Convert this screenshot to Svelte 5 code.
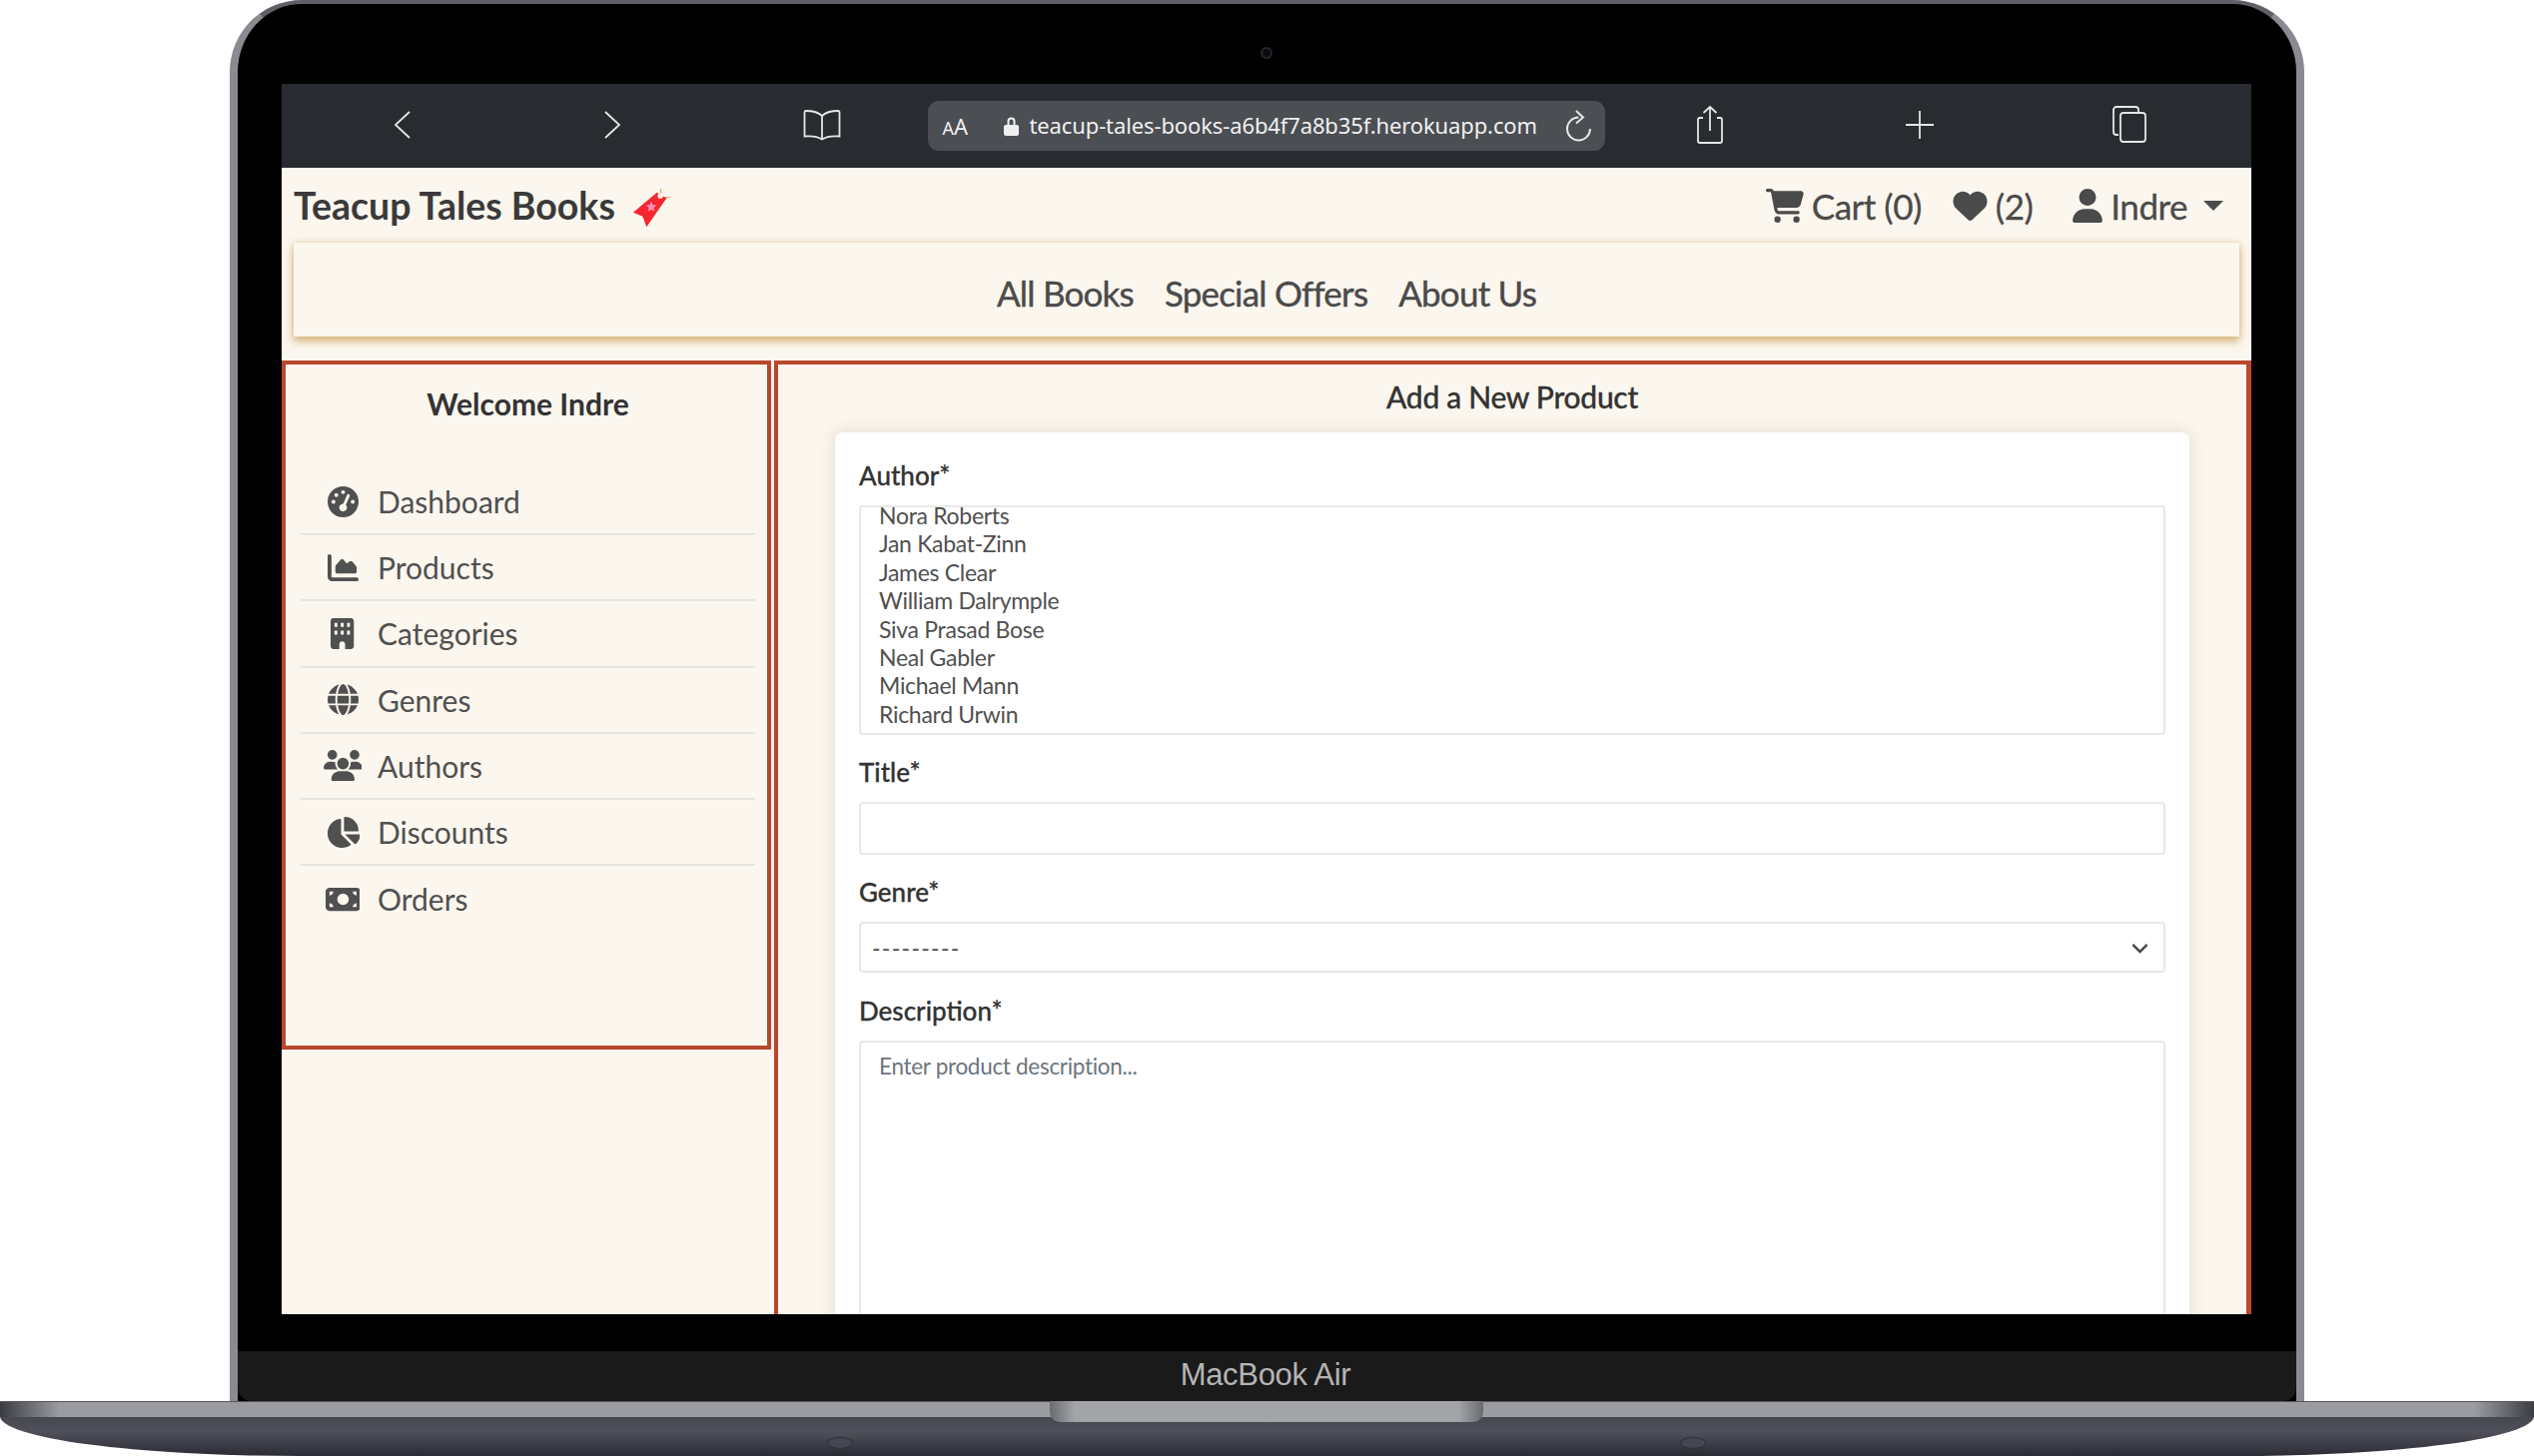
<script lang="ts">
	const sideLinks = [
		{ label: 'Dashboard', vb: '0 0 512 512', d: 'M0 256a256 256 0 1 1 512 0A256 256 0 1 1 0 256zM288 96a32 32 0 1 0 -64 0 32 32 0 1 0 64 0zM256 416c35.3 0 64-28.7 64-64c0-17.4-6.9-33.1-18.2-44.6L366 161.7c5.3-12.1-.2-26.3-12.3-31.6s-26.3 .2-31.6 12.3L257.9 288c-.6 0-1.3 0-1.9 0c-35.3 0-64 28.7-64 64s28.7 64 64 64zM176 144a32 32 0 1 0 -64 0 32 32 0 1 0 64 0zM96 288a32 32 0 1 0 0-64 32 32 0 1 0 0 64zm352-32a32 32 0 1 0 -64 0 32 32 0 1 0 64 0z' },
		{ label: 'Products', vb: '0 0 512 512', d: 'M64 64c0-17.7-14.3-32-32-32S0 46.3 0 64V400c0 44.2 35.8 80 80 80H480c17.7 0 32-14.3 32-32s-14.3-32-32-32H80c-8.8 0-16-7.2-16-16V64zm96 288H448c17.7 0 32-14.3 32-32V251.8c0-7.6-2.7-15-7.7-20.8l-65.8-76.8c-12.1-14.2-33.7-15-46.9-1.8l-21 21c-10 10-26.4 9.2-35.4-1.6l-39.2-47c-12.6-15.1-35.7-15.4-48.7-.6L135.9 215c-5.1 5.8-7.9 13.3-7.9 21.1v84c0 17.7 14.3 32 32 32z' },
		{ label: 'Categories', vb: '0 0 384 512', d: 'M48 0C21.5 0 0 21.5 0 48V464c0 26.5 21.5 48 48 48h96V432c0-26.5 21.5-48 48-48s48 21.5 48 48v80h96c26.5 0 48-21.5 48-48V48c0-26.5-21.5-48-48-48H48zM64 80h48v64H64zm104 0h48v64h-48zm104 0h48v64h-48zM64 208h48v64H64zm104 0h48v64h-48zm104 0h48v64h-48z' },
		{ label: 'Genres', vb: '0 0 512 512', d: 'M352 256c0 22.2-1.2 43.6-3.3 64H163.3c-2.2-20.4-3.3-41.8-3.3-64s1.2-43.6 3.3-64H348.7c2.2 20.4 3.3 41.8 3.3 64zm28.8-64H503.9c5.3 20.5 8.1 41.9 8.1 64s-2.8 43.5-8.1 64H380.8c2.1-20.6 3.2-42 3.2-64s-1.1-43.4-3.2-64zm112.6-32H376.7c-10-63.9-29.8-117.4-55.3-151.6c78.3 20.7 142 77.5 171.9 151.6zm-149.1 0H167.7c6.1-36.4 15.5-68.6 27-94.7c10.5-23.6 22.2-40.7 33.5-51.5C239.4 3.2 248.7 0 256 0s16.6 3.2 27.8 13.8c11.3 10.8 23 27.9 33.5 51.5c11.6 26 20.9 58.2 27 94.7zm-209 0H18.6C48.6 85.9 112.2 29.1 190.6 8.4C165.1 42.6 145.3 96.1 135.3 160zM8.1 192H131.2c-2.1 20.6-3.2 42-3.2 64s1.1 43.4 3.2 64H8.1C2.8 299.5 0 278.1 0 256s2.8-43.5 8.1-64zM194.7 446.6c-11.6-26-20.9-58.2-27-94.6H344.3c-6.1 36.4-15.5 68.6-27 94.6c-10.5 23.6-22.2 40.7-33.5 51.5C272.6 508.8 263.3 512 256 512s-16.6-3.2-27.8-13.8c-11.3-10.8-23-27.9-33.5-51.5zM135.3 352c10 63.9 29.8 117.4 55.3 151.6C112.2 482.9 48.6 426.1 18.6 352H135.3zm358.1 0c-30 74.1-93.6 130.9-171.9 151.6c25.5-34.2 45.2-87.7 55.3-151.6H493.4z' },
		{ label: 'Authors', vb: '0 0 640 512', d: 'M144 0a80 80 0 1 1 0 160A80 80 0 1 1 144 0zM512 0a80 80 0 1 1 0 160A80 80 0 1 1 512 0zM0 298.7C0 239.8 47.8 192 106.7 192h42.7c15.9 0 31 3.5 44.6 9.7c-1.3 7.2-1.9 14.7-1.9 22.3c0 38.2 16.8 72.5 43.3 96c-.2 0-.4 0-.7 0H21.3C9.6 320 0 310.4 0 298.7zM405.3 320c-.2 0-.4 0-.7 0c26.6-23.5 43.3-57.8 43.3-96c0-7.6-.7-15-1.9-22.3c13.6-6.3 28.7-9.7 44.6-9.7h42.7C592.2 192 640 239.8 640 298.7c0 11.8-9.6 21.3-21.3 21.3H405.3zM224 224a96 96 0 1 1 192 0 96 96 0 1 1 -192 0zM128 485.3C128 411.7 187.7 352 261.3 352H378.7C452.3 352 512 411.7 512 485.3c0 14.7-11.9 26.7-26.7 26.7H154.7c-14.7 0-26.7-11.9-26.7-26.7z' },
		{ label: 'Discounts', vb: '0 0 576 512', d: 'M304 240V16.6c0-9 7-16.6 16-16.6C443.7 0 544 100.3 544 224c0 9-7.6 16-16.6 16H304zM32 272C32 150.7 122.1 50.3 239 34.3c9.2-1.3 17 6.1 17 15.4V288L412.5 444.5c6.7 6.7 6.2 17.7-1.5 23.1C371.8 495.6 323.8 512 272 512C139.5 512 32 404.6 32 272zm526.4 16c9.3 0 16.6 7.8 15.4 17c-7.7 55.9-34.6 105.6-73.9 142.3c-6 5.6-15.4 5.2-21.2-.7L320 288H558.4z' },
		{ label: 'Orders', vb: '0 0 576 512', d: 'M64 64C28.7 64 0 92.7 0 128V384c0 35.3 28.7 64 64 64H512c35.3 0 64-28.7 64-64V128c0-35.3-28.7-64-64-64H64zm64 320H64V320c35.3 0 64 28.7 64 64zM64 192V128h64c0 35.3-28.7 64-64 64zM448 384c0-35.3 28.7-64 64-64v64H448zm64-192c-35.3 0-64-28.7-64-64h64v64zM288 160a96 96 0 1 1 0 192 96 96 0 1 1 0-192z' }
	];

	const authors = [
		'Nora Roberts',
		'Jan Kabat-Zinn',
		'James Clear',
		'William Dalrymple',
		'Siva Prasad Bose',
		'Neal Gabler',
		'Michael Mann',
		'Richard Urwin'
	];
</script>

<div class="device">
	<div class="lid">
		<div class="lid-top">
			<span class="camera"></span>
			<div class="screen">
				<div class="safari">
					<div class="safari-group">
						<svg class="tool" viewBox="0 0 60 40"><path d="M37 7 23 20l14 13" /></svg>
						<svg class="tool" viewBox="0 0 60 40"><path d="M23 7l14 13-14 13" /></svg>
						<svg class="tool" viewBox="0 0 60 40"><path d="M30 11c-3-3-9-5-16-5-1 0-1.5.5-1.5 1.5v24c6-.5 13 0 17.5 3 4.5-3 11.5-3.5 17.5-3v-24c0-1-.5-1.5-1.5-1.5-7 0-13 2-16 5zM30 11v23" /></svg>
					</div>
					<div class="url-pill">
						<span class="aa"><small>A</small>A</span>
						<svg class="lock" viewBox="0 0 15 20"><path d="M3.5 9V5.5a4 4 0 0 1 8 0V9H13a2 2 0 0 1 2 2v7a2 2 0 0 1-2 2H2a2 2 0 0 1-2-2v-7a2 2 0 0 1 2-2zM5.5 9h4V5.5a2 2 0 0 0-4 0z" /></svg>
						<span class="url">teacup-tales-books-a6b4f7a8b35f.herokuapp.com</span>
						<svg class="reload" viewBox="0 0 26 32"><path d="M12.5 7.500A11.500 11.500 0 1 0 24 19M10 1l7 6.500-7 6" /></svg>
					</div>
					<div class="safari-group">
						<svg class="tool" viewBox="0 0 60 40"><path d="M23 13h-3a2 2 0 0 0-2 2v21a2 2 0 0 0 2 2h20a2 2 0 0 0 2-2V15a2 2 0 0 0-2-2h-3M30 26V2M23.5 8 30 2l6.5 6" /></svg>
						<svg class="tool" viewBox="0 0 60 40"><path d="M30 6v28M16 20h28" /></svg>
						<svg class="tool" viewBox="0 0 60 40"><path d="M19 30h-2a3 3 0 0 1-3-3V5a3 3 0 0 1 3-3h19a3 3 0 0 1 3 3v2M24 8h19a3 3 0 0 1 3 3v23a3 3 0 0 1-3 3H24a3 3 0 0 1-3-3V11a3 3 0 0 1 3-3z" /></svg>
					</div>
				</div>

				<div class="page">
					<header class="topbar">
						<div class="brand">
							<span>Teacup Tales Books</span>
							<svg class="tag" viewBox="0 0 42 44">
								<path class="spark" d="M30 0v8M31 9h9" />
								<path class="tag-red" d="M26 4l10 6-21 30-4-11-10-4z" />
								<circle class="tag-hole" cx="29.5" cy="7.5" r="2.8" />
								<path class="tag-star" d="m20 13 1.6 3.8 4 .4-3 2.7.9 4-3.5-2-3.5 2 .9-4-3-2.7 4-.4z" />
							</svg>
						</div>
						<div class="user-links">
							<span class="user-link">
								<svg class="glyph cart" viewBox="0 0 576 512"><path d="M0 24C0 10.7 10.7 0 24 0H69.5c22 0 41.5 12.8 50.6 32h411c26.3 0 45.5 25 38.6 50.4l-41 152.3c-8.5 31.4-37 53.3-69.5 53.3H170.7l5.4 28.5c2.2 11.3 12.1 19.5 23.6 19.5H488c13.3 0 24 10.7 24 24s-10.7 24-24 24H199.7c-34.6 0-64.3-24.6-70.7-58.5L77.4 54.5c-.7-3.8-4-6.5-7.9-6.5H24C10.7 48 0 37.3 0 24zM128 464a48 48 0 1 1 96 0 48 48 0 1 1 -96 0zm336-48a48 48 0 1 1 0 96 48 48 0 1 1 0-96z" /></svg>
								Cart (0)
							</span>
							<span class="user-link">
								<svg class="glyph heart" viewBox="0 0 512 512"><path d="M47.6 300.4L228.3 469.1c7.5 7 17.4 10.9 27.7 10.9s20.2-3.9 27.7-10.9L464.4 300.4c30.4-28.3 47.6-68 47.6-109.5v-5.8c0-69.9-50.5-129.5-119.4-141C347 36.5 300.6 51.4 268 84L256 96 244 84c-32.6-32.6-79-47.5-124.6-39.9C50.5 55.6 0 115.2 0 185.1v5.8c0 41.5 17.2 81.2 47.6 109.5z" /></svg>
								(2)
							</span>
							<span class="user-link">
								<svg class="glyph person" viewBox="0 0 448 512"><path d="M224 256A128 128 0 1 0 224 0a128 128 0 1 0 0 256zm-45.7 48C79.8 304 0 383.8 0 482.3C0 498.7 13.3 512 29.7 512H418.3c16.4 0 29.7-13.3 29.7-29.7C448 383.8 368.2 304 269.7 304H178.3z" /></svg>
								Indre
								<span class="caret"></span>
							</span>
						</div>
					</header>

					<nav class="mainnav">
						<a href="#books">All Books</a>
						<a href="#offers">Special Offers</a>
						<a href="#about">About Us</a>
					</nav>

					<div class="content">
						<aside class="sidebar">
							<h2>Welcome Indre</h2>
							<ul>
								{#each sideLinks as link}
									<li>
										<span class="side-icon">
											<svg viewBox={link.vb}><path d={link.d} fill-rule="evenodd" /></svg>
										</span>
										{link.label}
									</li>
								{/each}
							</ul>
						</aside>

						<main class="panel">
							<h3>Add a New Product</h3>
							<form class="card">
								<label for="author">Author*</label>
								<div id="author" class="author-list">
									<ul>
										{#each authors as author}
											<li>{author}</li>
										{/each}
									</ul>
								</div>

								<label for="title">Title*</label>
								<input id="title" type="text" />

								<label for="genre">Genre*</label>
								<div class="select-wrap">
									<select id="genre">
										<option>---------</option>
									</select>
									<svg class="chevron" viewBox="0 0 16 16"><path d="m2 5 6 6 6-6" /></svg>
								</div>

								<label for="description">Description*</label>
								<textarea id="description" placeholder="Enter product description..."></textarea>
							</form>
						</main>
					</div>
				</div>
			</div>
		</div>
		<div class="chin">MacBook Air</div>
	</div>

	<div class="base">
		<div class="hinge"></div>
		<div class="notch"></div>
		<span class="foot foot-left"></span>
		<span class="foot foot-right"></span>
	</div>
</div>

<style>
	:global(body) {
		margin: 0;
		background: #fff;
	}

	.device {
		width: 2537px;
		height: 1458px;
		display: flex;
		flex-direction: column;
		align-items: center;
		overflow: hidden;
		font-family: Lato, 'Open Sans', sans-serif;
		color: #4a4a4a;
	}

	/* lid */
	.lid {
		width: 2077px;
		height: 1403px;
		box-sizing: border-box;
		flex: none;
		border: solid #8d8e93;
		border-width: 4px 8px 0;
		border-color: #5f6065 #8a8b90 #9a9ba0 #8a8b90;
		border-radius: 72px 72px 0 0;
		background: #000;
		display: flex;
		flex-direction: column;
		overflow: hidden;
	}

	.lid-top {
		position: relative;
		padding: 80px 45px 37px 44px;
	}

	.camera {
		position: absolute;
		left: 1024px;
		top: 43px;
		width: 8px;
		height: 8px;
		border: 2px solid #26272b;
		border-radius: 50%;
		background: #0c0c10;
	}

	.screen {
		height: 1232px;
		overflow: hidden;
		background: #fbf6ee;
	}

	.chin {
		flex: 1;
		background: #1a1a1a;
		border-radius: 0 0 14px 14px;
		text-align: center;
		font: 31px/48px 'Liberation Sans', Arial, sans-serif;
		letter-spacing: -0.3px;
		color: #b4b4b4;
		padding-right: 3px;
	}

	/* browser bar */
	.safari {
		height: 84px;
		box-sizing: border-box;
		padding: 0 92px 0 91px;
		background: #282c30;
		display: flex;
		align-items: center;
		justify-content: space-between;
	}

	.safari-group {
		display: flex;
		gap: 150px;
		margin-top: -2px;
	}

	.tool {
		width: 60px;
		height: 40px;
		overflow: visible;
		fill: none;
		stroke: #e6e6e6;
		stroke-width: 1.8;
	}

	.url-pill {
		width: 678px;
		height: 50px;
		box-sizing: border-box;
		padding: 0 13px 0 15px;
		border-radius: 11px;
		background: #4b4e53;
		display: flex;
		align-items: center;
		color: #f0f0f0;
	}

	.aa {
		width: 28px;
		font: 22px 'Noto Sans', sans-serif;
		white-space: nowrap;
	}

	.aa small {
		font-size: 18px;
	}

	.lock {
		width: 15px;
		height: 20px;
		margin-left: 33px;
		fill: #f0f0f0;
		fill-rule: evenodd;
	}

	.url {
		margin-left: 11px;
		margin-top: -2px;
		font: 22px 'Noto Sans', sans-serif;
		letter-spacing: -0.12px;
		white-space: nowrap;
	}

	.reload {
		width: 26px;
		height: 32px;
		margin-left: auto;
		overflow: visible;
		fill: none;
		stroke: #e6e6e6;
		stroke-width: 2;
	}

	/* top of page */
	.page {
		background: #fbf6ee;
	}

	.topbar {
		height: 75px;
		box-sizing: border-box;
		padding: 0 28px 0 12px;
		display: flex;
		align-items: center;
		justify-content: space-between;
		font-size: 35px;
	}

	.brand {
		display: flex;
		align-items: center;
		gap: 17px;
		font-size: 37.5px;
		font-weight: 700;
		color: #3a3a3a;
	}

	.tag {
		width: 40px;
		height: 42px;
		margin-top: 8px;
		overflow: visible;
	}

	.tag-red {
		fill: #f5262d;
	}

	.tag-hole {
		fill: #fbf6ee;
	}

	.tag-star {
		fill: #ff8db0;
	}

	.spark {
		fill: none;
		stroke: #d9b26b;
		stroke-width: 1.5;
	}

	.user-links {
		display: flex;
		align-items: center;
		gap: 31px;
		color: #4a4a4a;
		letter-spacing: -0.5px;
		-webkit-text-stroke: 0.3px #4a4a4a;
	}

	.user-link {
		display: flex;
		align-items: center;
		gap: 8px;
		fill: #4a4a4a;
	}

	.user-link:last-child {
		margin-left: 9px;
	}

	.glyph {
		height: 34px;
	}

	.cart {
		width: 38px;
	}

	.heart {
		width: 35px;
	}

	.person {
		width: 30px;
	}

	.caret {
		margin-left: 8px;
		border: solid transparent;
		border-width: 10px 10px 0;
		border-top-color: #4a4a4a;
	}

	.mainnav {
		height: 94px;
		box-sizing: border-box;
		padding-top: 5px;
		margin: 0 12px;
		display: flex;
		align-items: center;
		justify-content: center;
		gap: 31px;
		background: #fbf6ee;
		box-shadow: 0 5px 8px rgba(205, 165, 95, 0.75), 0 0 6px rgba(205, 165, 95, 0.4);
		font-size: 35px;
		letter-spacing: -0.8px;
		-webkit-text-stroke: 0.4px #4a4a4a;
	}

	.mainnav a {
		color: #4a4a4a;
		text-decoration: none;
	}

	/* dashboard layout */
	.content {
		margin-top: 24px;
		display: flex;
		align-items: flex-start;
		gap: 3px;
	}

	.sidebar {
		width: 490px;
		height: 690px;
		flex: none;
		box-sizing: border-box;
		border: 4px solid #b8482e;
		padding: 0 12px 0 15px;
	}

	.sidebar h2 {
		margin: 20px 0 0;
		height: 85px;
		text-align: center;
		font-size: 30px;
		line-height: 38px;
		font-weight: 700;
		color: #333;
	}

	.sidebar ul {
		margin: 0;
		padding: 0;
		list-style: none;
	}

	.sidebar li {
		height: 66.2px;
		box-sizing: border-box;
		display: flex;
		align-items: center;
		gap: 15px;
		padding-left: 22px;
		border-bottom: 2px solid #e7e5e1;
		font-size: 30px;
		color: #505050;
	}

	.sidebar li:last-child {
		border-bottom: none;
	}

	.side-icon {
		width: 40px;
		height: 31px;
		display: flex;
		justify-content: center;
		fill: #505050;
	}

	.side-icon svg {
		height: 31px;
	}

	.panel {
		flex: 1;
		height: 960px;
		box-sizing: border-box;
		border: solid #b8482e;
		border-width: 4px 5px 0 4px;
		padding: 0 57px;
	}

	.panel h3 {
		margin: 0;
		height: 68px;
		box-sizing: border-box;
		padding-top: 11px;
		text-align: center;
		font-size: 30px;
		line-height: 42px;
		letter-spacing: -0.3px;
		font-weight: 500;
		color: #333;
		-webkit-text-stroke: 0.3px #333;
	}

	.card {
		box-sizing: border-box;
		height: 950px;
		padding: 25px 24px;
		background: #fff;
		border-radius: 8px;
		box-shadow: 0 0 16px rgba(90, 80, 60, 0.16);
		display: flex;
		flex-direction: column;
	}

	.card label {
		display: block;
		height: 48px;
		flex: none;
		font-size: 26px;
		line-height: 36px;
		font-weight: 500;
		color: #333;
		-webkit-text-stroke: 0.3px #333;
	}

	.author-list,
	.card input,
	.card select,
	.card textarea {
		box-sizing: border-box;
		width: 100%;
		border: 2px solid #e8e8e8;
		border-radius: 4px;
		background: #fff;
		font-family: inherit;
		font-size: 23px;
		color: #505050;
		outline: none;
	}

	.author-list {
		height: 230px;
		flex: none;
		margin-bottom: 19px;
		padding: 0 18px;
		overflow: hidden;
		letter-spacing: -0.3px;
	}

	.author-list ul {
		margin: -6px 0 0;
		padding: 0;
		list-style: none;
	}

	.author-list li {
		height: 28.4px;
		line-height: 28.4px;
	}

	.card input {
		height: 53px;
		flex: none;
		margin-bottom: 19px;
	}

	.select-wrap {
		position: relative;
		flex: none;
		margin-bottom: 20px;
	}

	.card select {
		display: block;
		height: 51px;
		padding: 0 11px;
		letter-spacing: 1.3px;
		appearance: none;
	}

	.chevron {
		position: absolute;
		right: 16px;
		top: 17px;
		width: 19px;
		height: 19px;
		fill: none;
		stroke: #444;
		stroke-width: 2;
		pointer-events: none;
	}

	.card textarea {
		height: 400px;
		flex: none;
		padding: 10px 18px;
		font-size: 22.5px;
		letter-spacing: -0.3px;
		resize: none;
	}

	.card textarea::placeholder {
		color: #6c757d;
		opacity: 1;
	}

	/* laptop base */
	.base {
		position: relative;
		width: 2537px;
		height: 55px;
		flex: none;
		border-radius: 0 0 300px 300px / 0 0 40px 40px;
		background: linear-gradient(#3c3d46, #4f505a 55%, #2a2b35);
	}

	.hinge {
		height: 15px;
		border-top: 1px solid #55565a;
		background: linear-gradient(90deg, #3b3c42, #9b9ca1 60px, #9b9ca1 2477px, #3b3c42);
	}

	.notch {
		position: absolute;
		left: 1051px;
		top: 0;
		width: 434px;
		height: 21px;
		border-radius: 0 0 10px 10px;
		background: linear-gradient(90deg, #6a6b70, #a3a4a8 25px, #a3a4a8 409px, #6a6b70);
	}

	.foot {
		position: absolute;
		top: 36px;
		width: 24px;
		height: 10px;
		border-radius: 50%;
		border: 1px solid #2e2f38;
		background: #454650;
	}

	.foot-left {
		left: 828px;
	}

	.foot-right {
		left: 1682px;
	}
</style>
